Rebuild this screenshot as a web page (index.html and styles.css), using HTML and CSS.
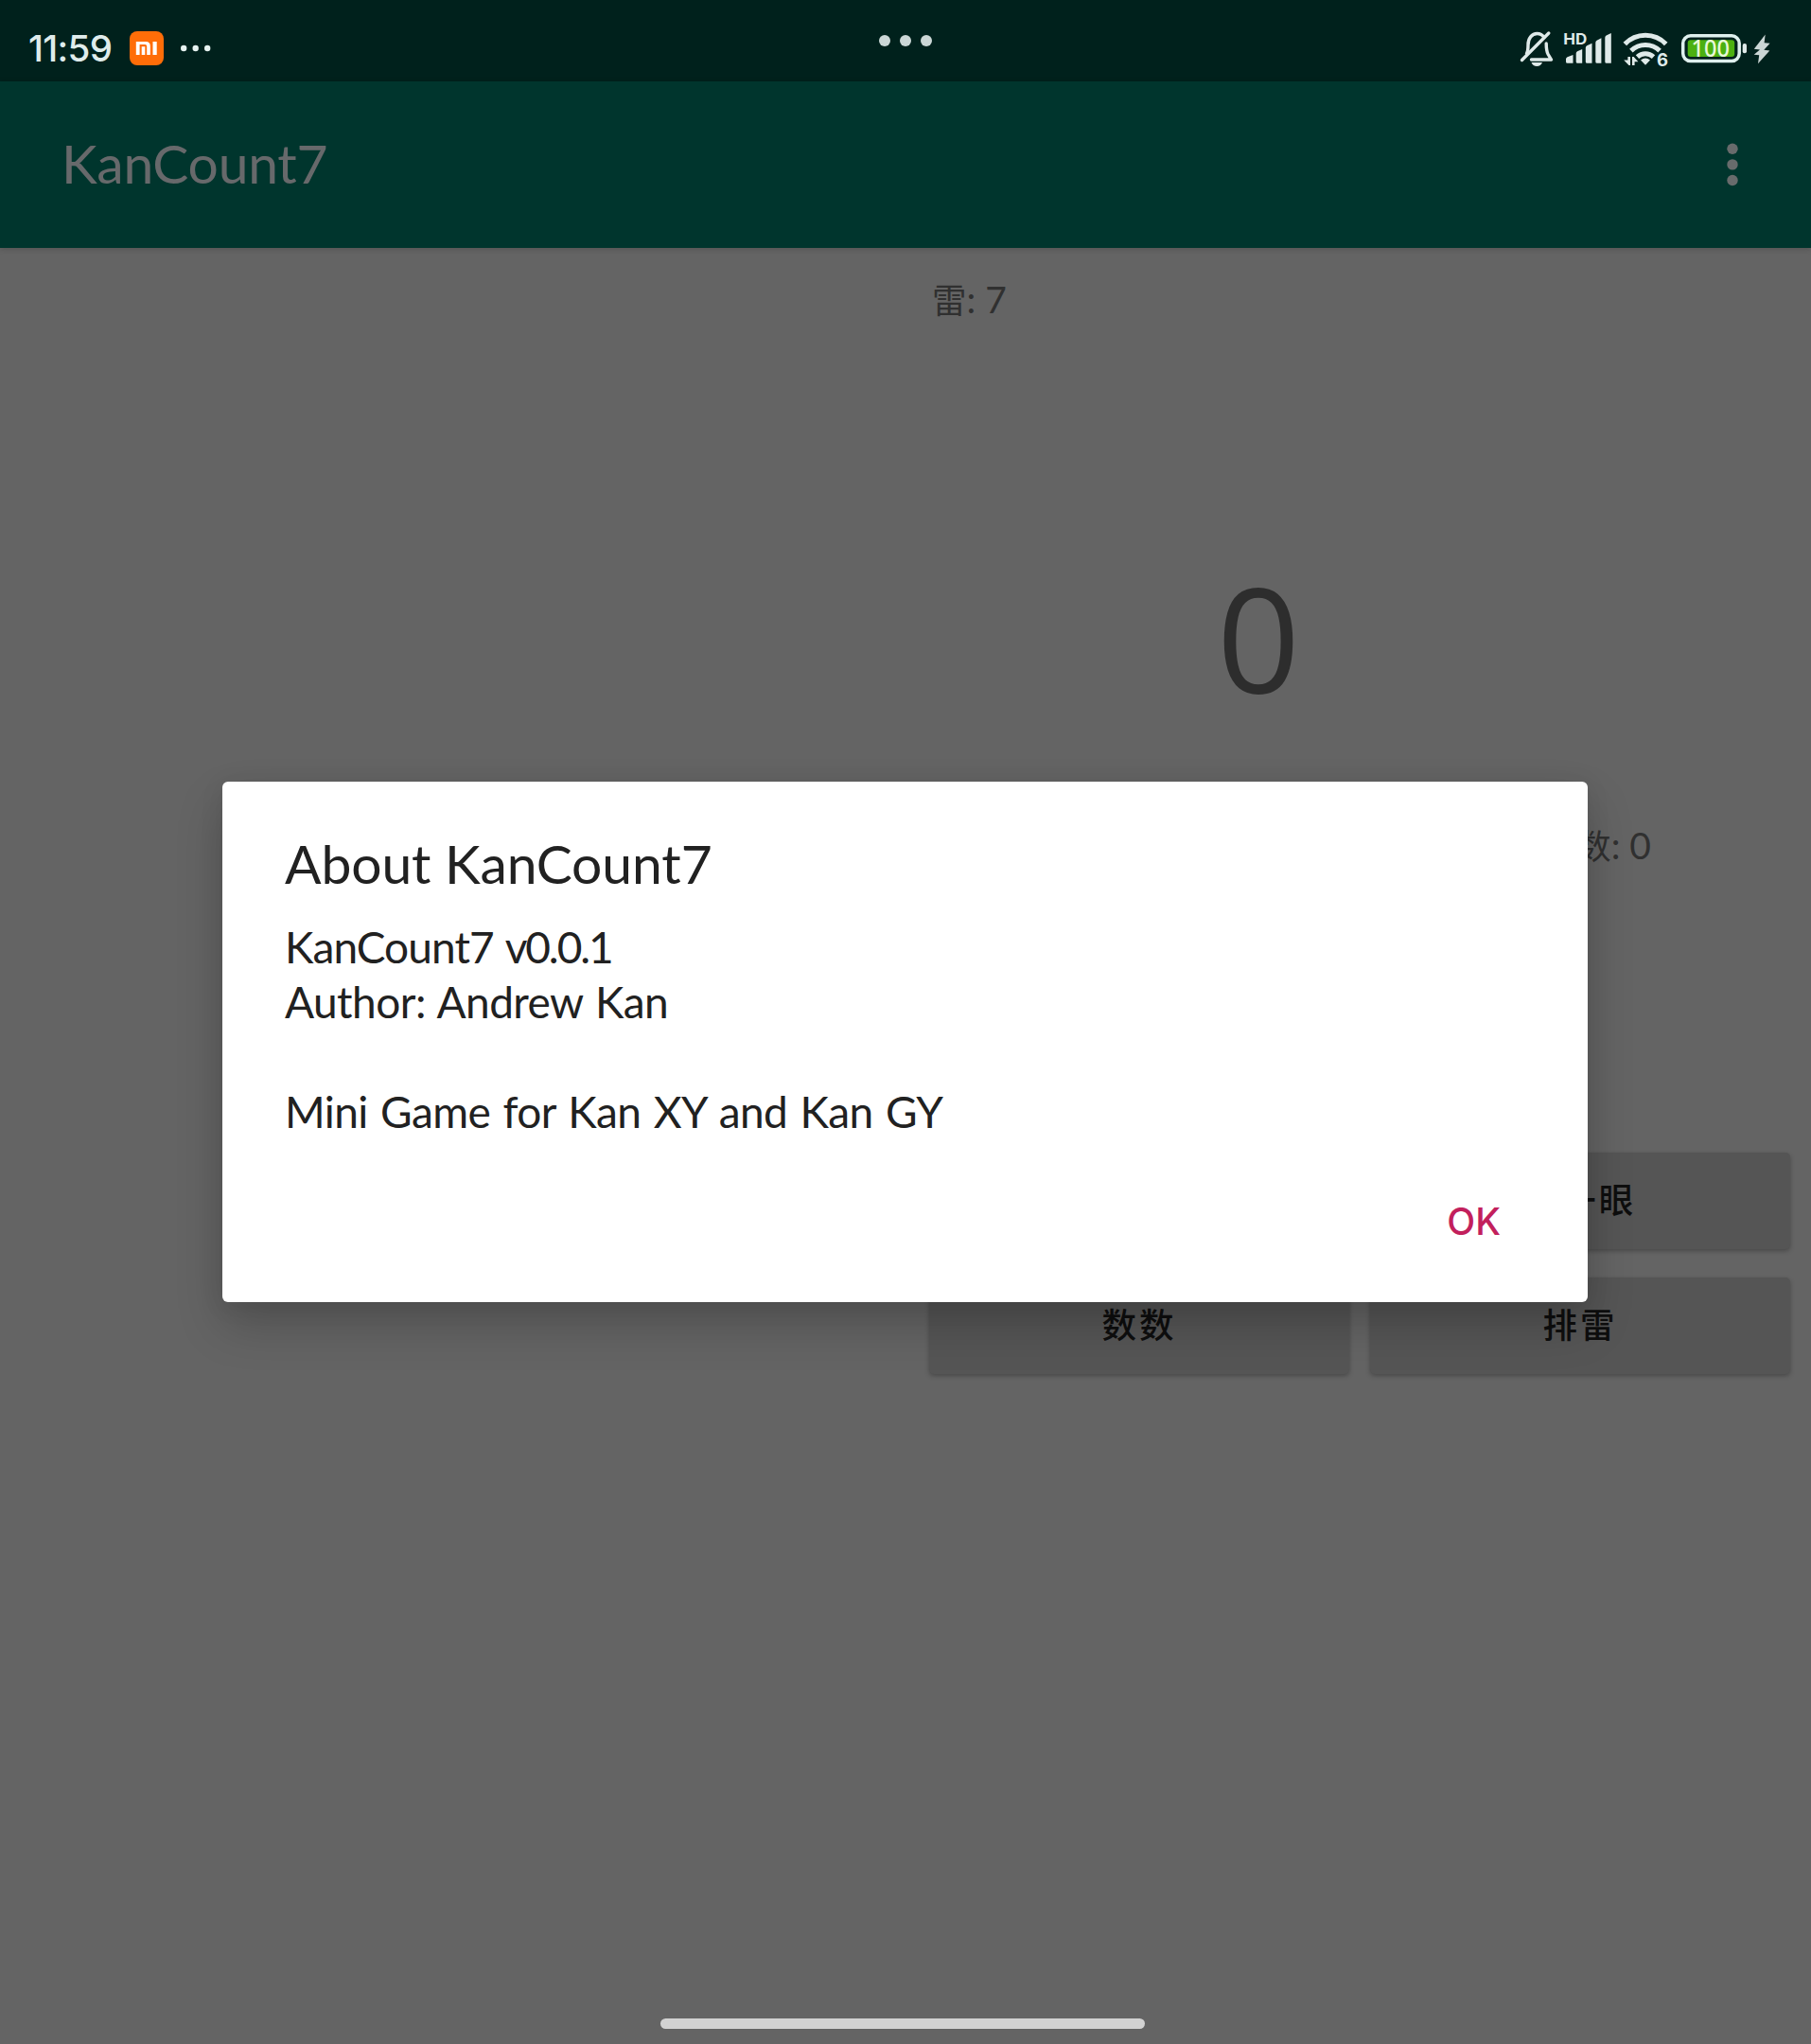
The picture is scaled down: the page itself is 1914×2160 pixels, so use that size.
FILE: index.html
```html
<!DOCTYPE html>
<html lang="zh">
<head>
<meta charset="utf-8">
<title>KanCount7</title>
<link rel="stylesheet" href="styles.css">
</head>
<body>
<div class="screen">
  <header class="status">
    <div class="status-left">
      <span class="clock">11:59</span>
      <svg class="mi" viewBox="0 0 36 36" width="36" height="36">
        <rect width="36" height="36" rx="8" fill="#ff6d08"/>
        <path d="M6.800 25V11h10.400q4.600 0 4.600 4.600V25h-3.600v-9q0-2-2-2h-5.600v11zM12.700 16.200h3.600V25h-3.600zM24.500 11h4.200v14h-4.200z" fill="#fff"/>
      </svg>
      <svg class="more" viewBox="0 0 32 8" width="32" height="8" fill="#e6f2f0"><circle cx="3.200" cy="4" r="3.200"/><circle cx="15.700" cy="4" r="3.200"/><circle cx="28.200" cy="4" r="3.200"/></svg>
    </div>
    <svg class="handle" viewBox="0 0 56 12" width="56" height="12" fill="#cbd7d6"><circle cx="6" cy="6" r="6"/><circle cx="28" cy="6" r="6"/><circle cx="50" cy="6" r="6"/></svg>
    <svg class="status-icons" viewBox="1600 30 280 44" width="280" height="44" fill="#dfeae9">
      <g fill="none" stroke="#dfeae9" stroke-width="3.400" stroke-linecap="round" stroke-linejoin="round">
        <path d="M1614.500 56.500c1.400-2.400 1.500-4.500 1.500-9 0-7 4-12 9.500-12 3.300 0 5.800 1.600 7.400 4"/>
        <path d="M1635.200 46c0 6 .3 8.500 2 11.500l3.300 5.500h-21"/>
        <path d="M1637.800 35l-28.300 28.500"/>
      </g>
      <path d="M1619.500 66h11.500c-1 2.700-3 4-5.750 4s-4.750-1.300-5.750-4z"/>
      <text class="tiny hd" x="1653.200" y="47" textLength="25" lengthAdjust="spacingAndGlyphs">HD</text>
      <path d="M1656 62.500q0-1.500 1.500-2.200l6-2.300v8.800h-6q-1.500 0-1.500-1.500zM1666.700 56.500q0-1.500 1.300-2.200l5.200-2.400v14.900h-5q-1.500 0-1.500-1.500zM1676.800 50.500q0-1.500 1.300-2.200l5.400-2.600v21.100h-5.200q-1.500 0-1.500-1.500zM1687.300 45q0-1.500 1.300-2.200l4.800-2.500v26.500h-4.600q-1.500 0-1.500-1.500zM1697.300 39.800q0-1.500 1.300-2.200l5.200-2.600v31.800h-5q-1.500 0-1.500-1.500z"/>
      <g fill="none" stroke="#dfeae9" stroke-width="5">
        <path d="M1718.300 46.600a30 30 0 0 1 43.400 0"/>
        <path d="M1724.900 53.600a21.500 21.500 0 0 1 30.200 0"/>
        <path d="M1731.500 60.200a12.500 12.500 0 0 1 17 0"/>
      </g>
      <path d="M1735 63.500q5-3.800 10 0l-5 5.200z"/>
      <path d="M1721.400 60h2.600v9h-1.500l-5.300-5.500h4.200zM1726 69v-9h1.600l4.800 5.300h-3.800v3.700z"/>
      <text class="tiny six" x="1752" y="69.500">6</text>
      <rect x="1779.700" y="37.800" width="59.500" height="26.700" rx="8" fill="none" stroke="#dff0ee" stroke-width="3.500"/>
      <rect x="1784.700" y="42.300" width="49.500" height="17.800" rx="3" fill="#4cb011"/>
      <rect x="1842.700" y="46" width="4.300" height="10.300" rx="2"/>
      <text class="charge" x="1788.500" y="60" textLength="40.500" lengthAdjust="spacingAndGlyphs">100</text>
      <path fill="#cbd6d5" d="M1866.700 36.500l-11.900 15.300 6.200.8-6.300 5.200 5.500.4-1.200 9 12.300-13.700-6-.8 6.300-6.900-6-.5z"/>
    </svg>
  </header>

  <div class="appbar">
    <h1 class="app-title">KanCount7</h1>
    <svg viewBox="0 0 12 46" width="12" height="46" fill="#686b6c"><circle cx="6" cy="6.300" r="5.700"/><circle cx="6" cy="22.900" r="5.700"/><circle cx="6" cy="39.500" r="5.700"/></svg>
  </div>

  <main class="game">
    <section class="panel">
      <div class="mines"><span class="cjk">雷</span>: 7</div>
      <div class="counter">0</div>
      <div class="score"><span class="cjk">数</span>: 0</div>
      <div class="buttons">
        <button class="btn peek">看一眼</button>
        <button class="btn">数数</button>
        <button class="btn">排雷</button>
      </div>
    </section>
  </main>
  <div class="nav-pill"></div>

  <div class="dialog" role="dialog">
    <h2 class="dialog-title">About KanCount7</h2>
    <div class="dialog-body">
      <p class="version">KanCount7 <span class="num">v0.0.1</span></p>
      <p class="author">Author: Andrew Kan</p>
      <p class="about">Mini Game for Kan XY and Kan GY</p>
    </div>
    <div class="actions"><span class="ok">OK</span></div>
  </div>
</div>
</body>
</html>
```
FILE: styles.css
```css
* { box-sizing: border-box; }
body {
  margin: 0;
  font-family: Lato, "Noto Sans CJK SC", sans-serif;
}
h1, h2, p { margin: 0; font-weight: 400; }
.screen {
  position: relative;
  display: flex;
  flex-direction: column;
  width: 1914px;
  height: 2160px;
  overflow: hidden;
  background: #646464;
}

/* status bar */
.status {
  display: grid;
  grid-template-columns: 1fr 56px 1fr;
  height: 86px;
  background: #00211c;
}
.status-left { display: flex; align-items: flex-start; padding: 33px 0 0 30px; }
.clock {
  width: 107px;
  font: 500 38.5px/37px Inter, sans-serif;
  letter-spacing: -0.7px;
  color: #dfecec;
}
.more { margin: 14px 0 0 17.500px; }
.handle { margin-top: 37px; }
.status-icons { justify-self: end; margin: 30px 35px 0 0; }
.tiny { font-family: Inter, sans-serif; font-weight: 700; }
.hd { font-size: 16px; }
.six { font-size: 18.500px; }
.charge { font: 500 24.500px "Noto Sans", sans-serif; fill: #e8f8d8; }

/* app bar */
.appbar {
  display: flex;
  align-items: center;
  justify-content: space-between;
  height: 176px;
  padding: 0 77px 0 65px;
  background: #00352d;
  box-shadow: 0 1px 6px rgba(0, 0, 0, .2);
}
.app-title { height: 176px; font-size: 57px; line-height: 172px; letter-spacing: -0.25px; color: #67696b; }

/* game area */
.game { display: flex; justify-content: flex-end; height: 1871px; }
.panel { width: 957px; padding: 31px 22px 0 25px; color: #303030; }
.cjk { font: 36.500px/1 "Noto Sans CJK SC", sans-serif; }
.mines { padding-left: 3px; font-size: 39px; line-height: 46px; }
.counter {
  width: 696px;
  margin-top: 244px;
  text-align: center;
  font: 154px/180px "Open Sans", sans-serif;
  color: #2d2d2d;
}
.score {
  margin: 107px 147px 0 0;
  text-align: right;
  font-size: 39px;
  line-height: 46px;
}
.buttons {
  display: grid;
  grid-template-columns: 1fr 1fr;
  grid-auto-rows: 101.500px;
  gap: 30.500px 22px;
  margin-top: 302px;
}
.btn {
  padding: 0 0 4px;
  border: 0;
  border-radius: 5px;
  background: #555;
  box-shadow: 0 2px 5px rgba(0, 0, 0, .28);
  font: 500 36.500px/97px "Noto Sans CJK SC", sans-serif;
  letter-spacing: 3px;
  color: #0e0e0e;
}
.peek { grid-column: 2; }
.nav-pill { width: 512px; height: 11px; margin-left: 698px; border-radius: 6px; background: #d2d2d2; }

/* about dialog, over the game */
.dialog {
  position: absolute;
  left: 235px;
  top: 826px;
  width: 1443px;
  height: 550px;
  padding: 52px 67px 0 66px;
  border-radius: 6px;
  background: #fff;
  color: #212121;
  box-shadow: 0 24px 50px rgba(0, 0, 0, .2), 0 4px 26px rgba(0, 0, 0, .08);
}
.dialog-title { font-size: 57px; line-height: 68px; letter-spacing: -0.1px; }
.dialog-body { margin-top: 26px; font-size: 46px; line-height: 58px; }
.version { letter-spacing: -0.9px; word-spacing: 1px; }
.num { letter-spacing: -2.100px; }
.author { letter-spacing: -0.550px; word-spacing: 2px; }
.about { margin-top: 58px; letter-spacing: -0.600px; word-spacing: 2.200px; }
.actions { display: flex; justify-content: flex-end; margin-top: 63px; padding-right: 25px; }
.ok { font: 450 39px/48px Inter, sans-serif; letter-spacing: 0; color: #c2205c; }
```
